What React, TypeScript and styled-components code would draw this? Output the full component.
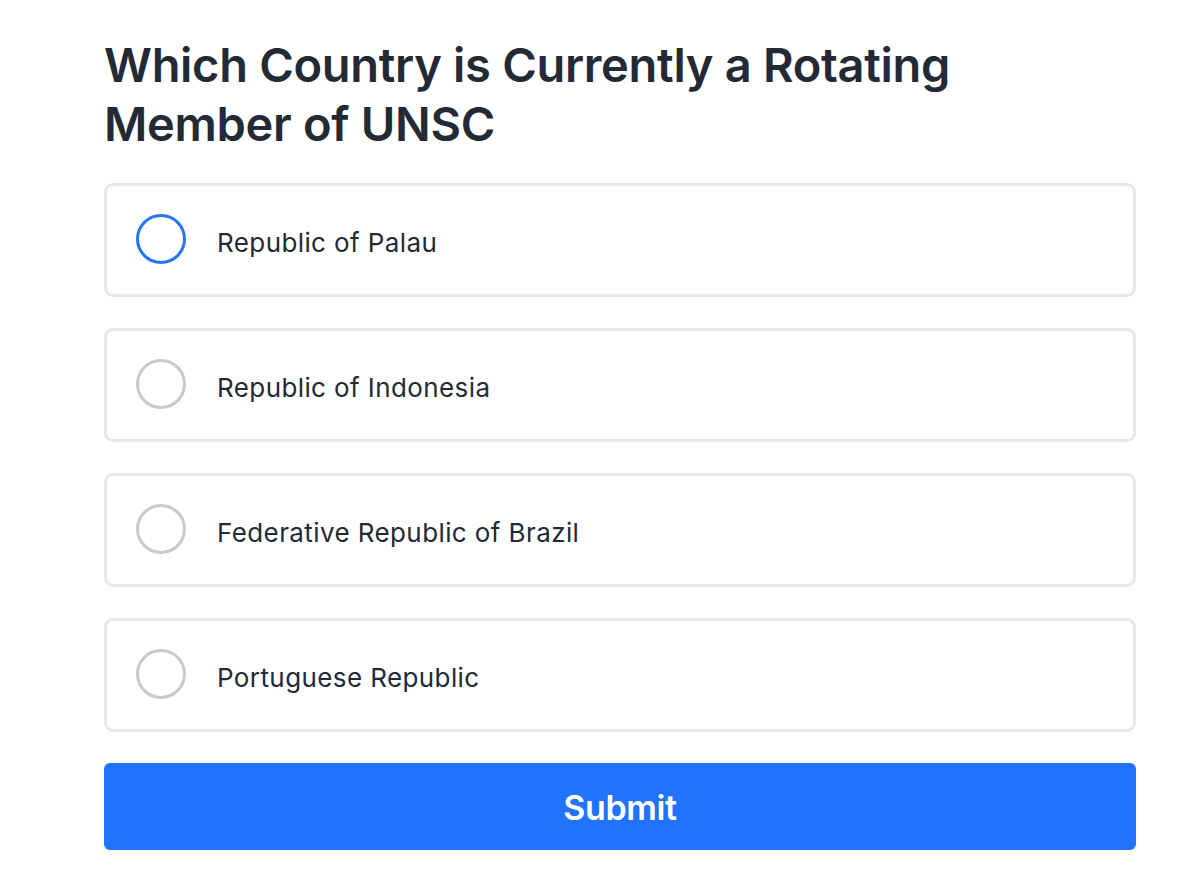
import React, { useState } from "react";
import styled, { createGlobalStyle } from "styled-components";

const Global = createGlobalStyle`
  html, body { margin: 0; padding: 0; background: #ffffff; }
  body { font-family: Inter, "Noto Sans", sans-serif; color: #232a35; }
  *, *::before, *::after { box-sizing: border-box; }
`;

const Page = styled.main`
  width: 1200px;
  padding: 35px 64px 20px 104px;
  display: flex;
  flex-direction: column;
`;

const Title = styled.h1`
  margin: 0 0 30px;
  font-size: 47px;
  line-height: 59px;
  font-weight: 600;
  letter-spacing: -0.3px;
  color: #232a35;
  max-width: 900px;
`;

const Options = styled.div`
  display: flex;
  flex-direction: column;
  gap: 31px;
`;

const Option = styled.label`
  display: flex;
  align-items: center;
  gap: 31px;
  height: 114px;
  padding: 0 29px;
  border: 3px solid #e8e8e8;
  border-radius: 9px;
  cursor: pointer;
  background: #fff;
`;

const Radio = styled.span<{ $active: boolean }>`
  width: 50px;
  height: 50px;
  border-radius: 50%;
  border: 3.5px solid ${(p) => (p.$active ? "#2575f5" : "#c9c9cb")};
  flex: none;
  margin-top: -2px;
`;

const OptionText = styled.span`
  font-size: 26px;
  letter-spacing: 0.4px;
  color: #232a35;
  padding-top: 4px;
`;

const Submit = styled.button`
  margin-top: 31px;
  height: 87px;
  border: none;
  border-radius: 6px;
  background: #2173fc;
  color: #fff;
  font-family: Inter, sans-serif;
  font-size: 34px;
  font-weight: 600;
  letter-spacing: -0.4px;
  padding-top: 3px;
  cursor: pointer;
`;

const options = [
  "Republic of Palau",
  "Republic of Indonesia",
  "Federative Republic of Brazil",
  "Portuguese Republic",
];

export default function App() {
  const [sel] = useState(0);
  return (
    <Page>
      <Global />
      <Title>Which Country is Currently a Rotating Member of UNSC</Title>
      <Options>
        {options.map((o, i) => (
          <Option key={o}>
            <Radio $active={i === sel} />
            <OptionText>{o}</OptionText>
          </Option>
        ))}
      </Options>
      <Submit>Submit</Submit>
    </Page>
  );
}
